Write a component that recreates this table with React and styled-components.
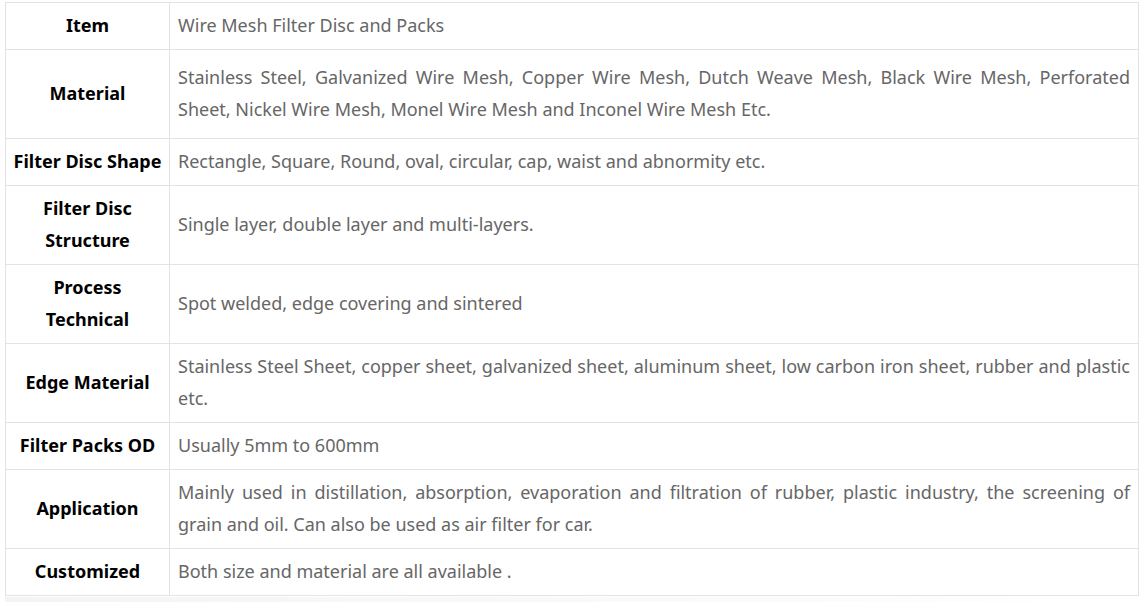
import React from 'react'
import styled, { createGlobalStyle } from 'styled-components'

const GlobalStyle = createGlobalStyle`
  body {
    margin: 0;
    padding: 2px 6px 0 5px;
    background: #fff;
    font-family: "Noto Sans", "Open Sans", Arial, sans-serif;
  }
`

const Table = styled.table`
  width: 1134px;
  border-collapse: collapse;
  table-layout: fixed;
  border: 1px solid #e3e3e3;
`

const Label = styled.th`
  width: 149px;
  border: 1px solid #e3e3e3;
  padding: ${p => (p.$tall ? '11px 7px 13px' : '6px 7px 8px')};
  font-size: 18px;
  line-height: 32px;
  font-weight: 700;
  color: #000;
  text-align: center;
  vertical-align: middle;
`

const Value = styled.td`
  border: 1px solid #e3e3e3;
  padding: ${p => (p.$tall ? '11px 8px 13px' : '6px 8px 8px')};
  font-size: 18px;
  line-height: 32px;
  color: #666;
  text-align: justify;
  vertical-align: middle;
`

const Shade = styled.div`
  height: 6px;
  margin-top: 1px;
  background: linear-gradient(to right, #f4f4f4, #fafafa 60%, #fff);
`

const rows = [
  ['Item', 'Wire Mesh Filter Disc and Packs'],
  ['Material', 'Stainless Steel, Galvanized Wire Mesh, Copper Wire Mesh, Dutch Weave Mesh, Black Wire Mesh, Perforated Sheet, Nickel Wire Mesh, Monel Wire Mesh and Inconel Wire Mesh Etc.', true],
  ['Filter Disc Shape', 'Rectangle, Square, Round, oval, circular, cap, waist and abnormity etc.'],
  ['Filter Disc Structure', 'Single layer, double layer and multi-layers.'],
  ['Process Technical', 'Spot welded, edge covering and sintered'],
  ['Edge Material', 'Stainless Steel Sheet, copper sheet, galvanized sheet, aluminum sheet, low carbon iron sheet, rubber and plastic etc.'],
  ['Filter Packs OD', 'Usually 5mm to 600mm'],
  ['Application', 'Mainly used in distillation, absorption, evaporation and filtration of rubber, plastic industry, the screening of grain and oil. Can also be used as air filter for car.'],
  ['Customized', 'Both size and material are all available .'],
]

export default function App() {
  return (
    <>
      <GlobalStyle />
      <Table>
        <tbody>
          {rows.map(([k, v, tall]) => (
            <tr key={k}>
              <Label $tall={tall}>{k}</Label>
              <Value $tall={tall}>{v}</Value>
            </tr>
          ))}
        </tbody>
      </Table>
      <Shade />
    </>
  )
}
